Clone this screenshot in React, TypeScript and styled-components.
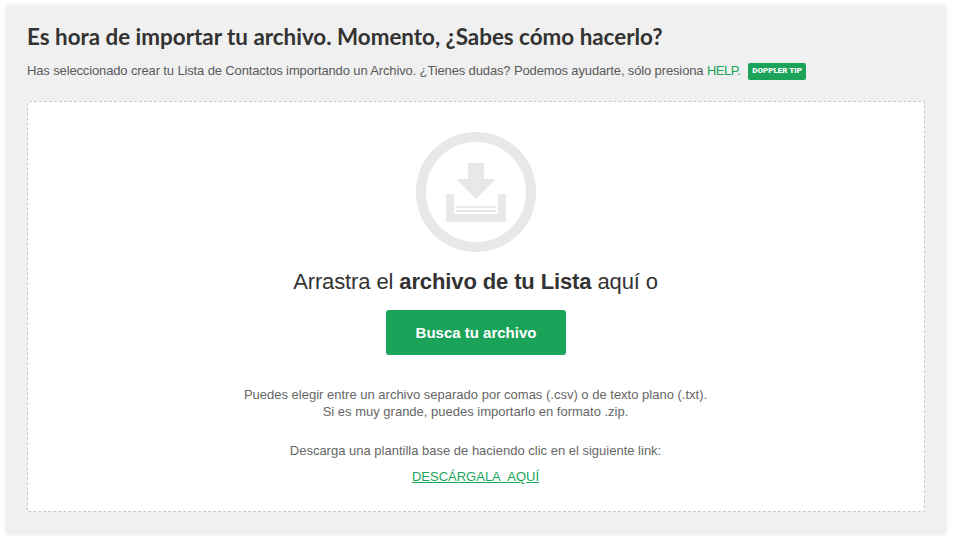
import React, { FC } from 'react'
import styled, { createGlobalStyle } from 'styled-components'

const GlobalStyle = createGlobalStyle`
  html, body {
    margin: 0;
    padding: 0;
    background: #fff;
  }
  * {
    box-sizing: border-box;
  }
`

const DownloadIcon: FC = () => (
  <svg width="120" height="120" viewBox="0 0 120 120">
    <circle cx="60" cy="60" r="55" fill="none" stroke="#e8e8e8" strokeWidth="10" />
    <path d="M52 31h16v16h12L60 67 40 47h12z" fill="#e8e8e8" />
    <path d="M30 62h8v20h44V62h8v28H30z" fill="#e8e8e8" />
    <rect x="40" y="74" width="40" height="2" fill="#e8e8e8" />
    <rect x="40" y="78" width="40" height="2" fill="#e8e8e8" />
  </svg>
)

const App: FC = () => (
  <>
    <GlobalStyle />
    <Page>
      <Panel>
        <Title>Es hora de importar tu archivo. Momento, ¿Sabes cómo hacerlo?</Title>
        <Intro>
          Has seleccionado crear tu Lista de Contactos importando un Archivo. ¿Tienes dudas? Podemos
          ayudarte, sólo presiona <HelpLink href="#">HELP.</HelpLink>
          <TipBadge>Doppler tip</TipBadge>
        </Intro>
        <DropZone>
          <DownloadIcon />
          <DropText>
            Arrastra el <strong>archivo de tu Lista</strong> aquí o
          </DropText>
          <BrowseButton>Busca tu archivo</BrowseButton>
          <Note>
            Puedes elegir entre un archivo separado por comas (.csv) o de texto plano (.txt).
            <br />
            Si es muy grande, puedes importarlo en formato .zip.
          </Note>
          <TemplateNote>Descarga una plantilla base de haciendo clic en el siguiente link:</TemplateNote>
          <TemplateLink href="#">DESCÁRGALA&nbsp; AQUÍ</TemplateLink>
        </DropZone>
      </Panel>
    </Page>
  </>
)

export default App

const Page = styled.div`
  width: 953px;
  height: 539px;
  padding: 3px 5px 3px 4px;
  background: #fff;
  font-family: 'Liberation Sans', Arial, sans-serif;
`

const Panel = styled.main`
  height: 533px;
  padding: 18px 21px 20px 21px;
  background: #f0f0f0;
  border: 2px solid #f6f6f6;
  border-radius: 6px;
`

const Title = styled.h1`
  margin: 0;
  font-family: Lato, 'Liberation Sans', sans-serif;
  font-size: 22.4px;
  font-weight: 700;
  line-height: 28px;
  color: #333;
`

const Intro = styled.p`
  margin: 11px 0 0;
  height: 18px;
  font-size: 13px;
  line-height: 18px;
  letter-spacing: -0.135px;
  color: #5a5a5a;
`

const HelpLink = styled.a`
  letter-spacing: -0.5px;
  color: #1aa55b;
  text-decoration: none;
`

const TipBadge = styled.span`
  display: inline-block;
  vertical-align: 2px;
  margin-left: 8px;
  padding: 0 4px;
  height: 17px;
  background: #1ba35a;
  border-radius: 2px;
  font-family: Roboto, 'Liberation Sans', sans-serif;
  font-size: 8px;
  font-weight: 900;
  letter-spacing: 0;
  line-height: 16px;
  color: #fff;
  text-transform: uppercase;
`

const DropZone = styled.section`
  display: flex;
  flex-direction: column;
  align-items: center;
  margin-top: 21px;
  height: 411px;
  padding-top: 30px;
  background: #fff;
  border: 1px dashed #c8c8c8;
  border-radius: 2px;
`

const DropText = styled.p`
  margin: 15px 1px 0 0;
  font-size: 22px;
  line-height: 30px;
  letter-spacing: -0.12px;
  color: #333;

  strong {
    font-weight: 700;
  }
`

const BrowseButton = styled.button`
  margin-top: 13px;
  width: 180px;
  height: 45px;
  background: #1ba35a;
  border: none;
  border-radius: 3px;
  font-family: 'Liberation Sans', Arial, sans-serif;
  font-size: 15px;
  font-weight: 700;
  color: #fff;
`

const Note = styled.p`
  margin: 31px 0 0;
  padding-right: 1px;
  font-size: 13px;
  line-height: 17px;
  text-align: center;
  color: #666;
`

const TemplateNote = styled(Note)`
  margin-top: 22px;
`

const TemplateLink = styled.a`
  margin-top: 9px;
  padding-right: 1px;
  font-size: 13px;
  line-height: 18px;
  color: #1aa55b;
  text-decoration: underline;
`
